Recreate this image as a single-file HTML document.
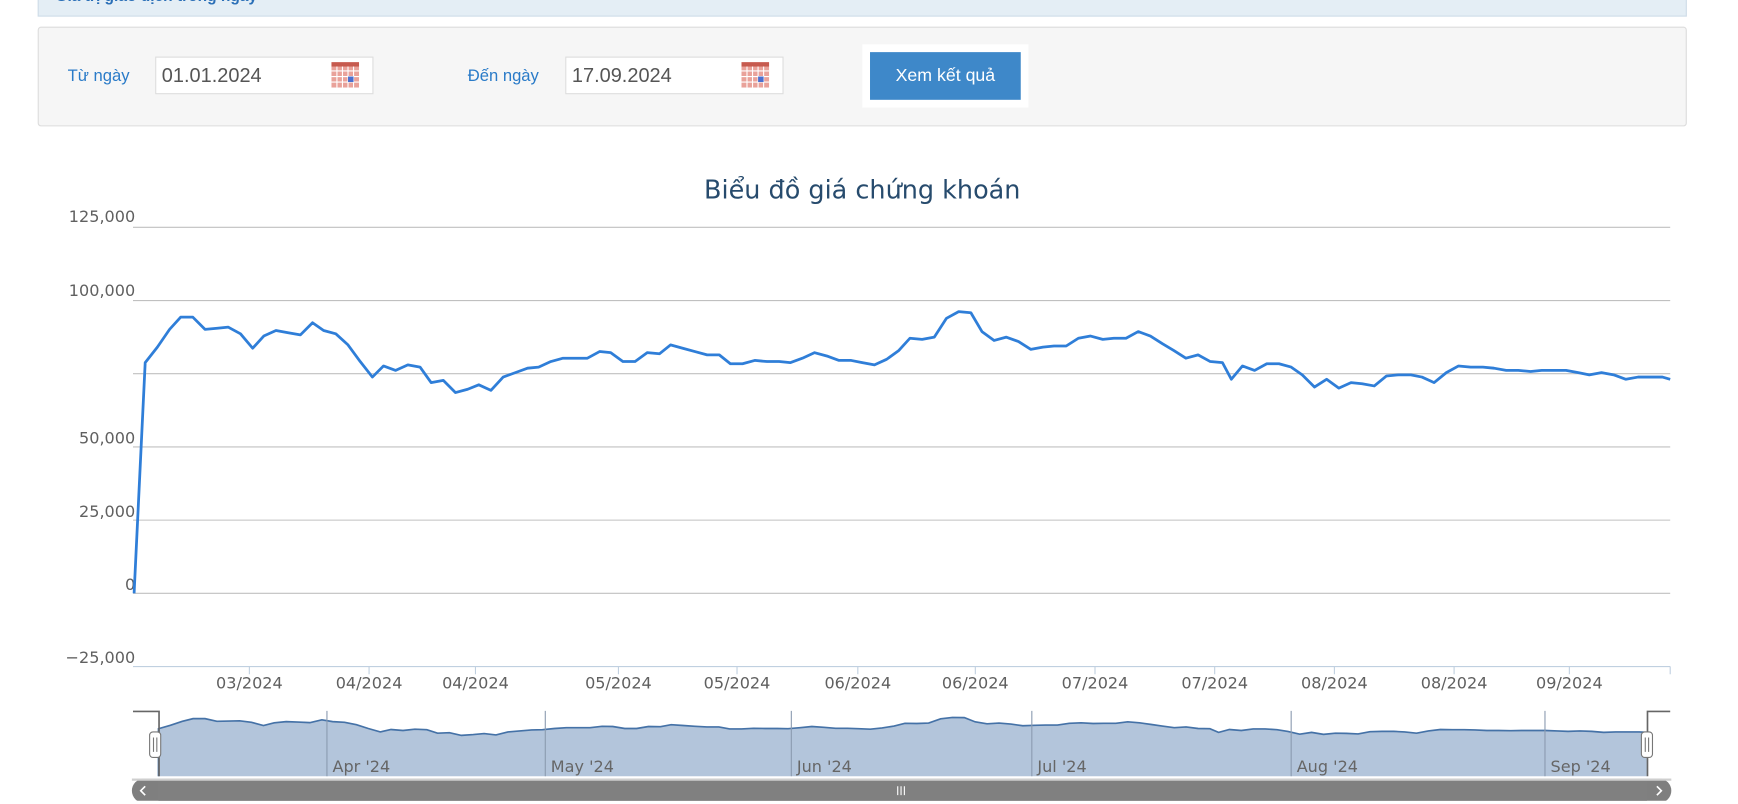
<!DOCTYPE html>
<html><head><meta charset="utf-8">
<style>
html,body{margin:0;padding:0;background:#fff;overflow:hidden;width:1738px;height:804px}
#w{position:absolute;left:0;top:0;width:1570px;height:722px;transform:scale(1.1083,1.109);transform-origin:0 0;font-family:"Liberation Sans","DejaVu Sans",sans-serif}
.a{position:absolute}
</style></head><body>
<div id="w">
 <div class="a" style="left:34px;top:-10px;width:1488px;height:25px;background:#e4eef5;border:1px solid #cfdde8;box-sizing:border-box"></div>
 <div class="a" style="left:50px;top:-12px;font-size:14px;font-weight:bold;color:#2a6fb7">Giá trị giao dịch trong ngày</div>
 <div class="a" style="left:34px;top:24px;width:1488px;height:90px;background:#f6f6f6;border:1px solid #dcdcdc;border-radius:3px;box-sizing:border-box"></div>
 <div class="a" style="left:61px;top:60px;font-size:15px;color:#2a7bc8">Từ ngày</div>
 <div class="a" style="left:140px;top:51px;width:197px;height:34px;background:#fff;border:1px solid #ddd;box-sizing:border-box"></div>
 <div class="a" style="left:146px;top:58px;font-size:18px;color:#555">01.01.2024</div>
 <div class="a" style="left:422px;top:60px;font-size:15px;color:#2a7bc8">Đến ngày</div>
 <div class="a" style="left:510px;top:51px;width:197px;height:34px;background:#fff;border:1px solid #ddd;box-sizing:border-box"></div>
 <div class="a" style="left:516px;top:58px;font-size:18px;color:#555">17.09.2024</div>
 <svg class="a" style="left:299px;top:56px" width="25" height="23"><rect x="0" y="0" width="25" height="23" fill="#e9a29a"/><rect x="0" y="0" width="25" height="4" fill="#c65a4e"/><g stroke="#fff" stroke-width="1"><path d="M0 8h25M0 13h25M0 18h25M5 4v19M10 4v19M15 4v19M20 4v19"/></g><rect x="15" y="13" width="5" height="5" fill="#4a6fd0"/></svg>
 <svg class="a" style="left:669px;top:56px" width="25" height="23"><rect x="0" y="0" width="25" height="23" fill="#e9a29a"/><rect x="0" y="0" width="25" height="4" fill="#c65a4e"/><g stroke="#fff" stroke-width="1"><path d="M0 8h25M0 13h25M0 18h25M5 4v19M10 4v19M15 4v19M20 4v19"/></g><rect x="15" y="13" width="5" height="5" fill="#4a6fd0"/></svg>
 <div class="a" style="left:778px;top:40px;width:150px;height:57px;background:#fff"></div>
 <div class="a" style="left:785px;top:47px;width:136px;height:43px;background:#3e88c9;color:#fff;font-size:16px;line-height:43px;text-align:center">Xem kết quả</div>
 <div class="a" style="left:0;width:1556px;top:159px;text-align:center;font-size:23px;color:#274b6d;font-family:'DejaVu Sans',sans-serif">Biểu đồ giá chứng khoán</div>
 <svg class="a" style="left:0;top:0" width="1560" height="722" id="s" font-family="DejaVu Sans, sans-serif"></svg>
</div>
<script>
var P=[[121,535],[131,327],[142,313],[153,297],[163,286],[174,286],[185,297],[196,296],[206,295],[217,301],[228,314],[238,303],[249,298],[260,300],[271,302],[282,291],[292,298],[303,301],[314,311],[325,326],[336,340],[346,330],[357,334],[368,329],[379,331],[389,345],[400,343],[411,354],[422,351],[432,347],[443,352],[454,340],[465,336],[476,332],[486,331],[497,326],[508,323],[519,323],[530,323],[541,317],[551,318],[562,326],[573,326],[584,318],[595,319],[605,311],[616,314],[627,317],[638,320],[649,320],[659,328],[670,328],[681,325],[692,326],[703,326],[713,327],[724,323],[735,318],[746,321],[757,325],[768,325],[778,327],[789,329],[800,324],[811,316],[821,305],[832,306],[843,304],[854,287],[865,281],[876,282],[886,299],[897,307],[908,304],[919,308],[930,315],[941,313],[951,312],[962,312],[973,305],[984,303],[995,306],[1005,305],[1016,305],[1027,299],[1038,303],[1049,310],[1059,316],[1070,323],[1081,320],[1092,326],[1103,327],[1111,342],[1121,330],[1132,334],[1143,328],[1154,328],[1165,331],[1175,338],[1186,349],[1197,342],[1208,350],[1219,345],[1229,346],[1240,348],[1251,339],[1262,338],[1273,338],[1283,340],[1294,345],[1305,336],[1316,330],[1327,331],[1338,331],[1348,332],[1359,334],[1370,334],[1381,335],[1391,334],[1402,334],[1413,334],[1424,336],[1434,338],[1445,336],[1456,338],[1467,342],[1478,340],[1489,340],[1500,340],[1507,342]];
var h='';
[205,271,337,403,469,535].forEach(function(y){h+='<line x1="120" x2="1507" y1="'+y+'" y2="'+y+'" stroke="#c0c0c0" stroke-width="1"/>'});
h+='<line x1="120" x2="1507" y1="601" y2="601" stroke="#c0d0e0"/>';
[['125,000',195],['100,000',262],['50,000',395],['25,000',461],['0',527],['\u221225,000',593]].forEach(function(l){h+='<text x="122" y="'+(l[1]+5)+'" text-anchor="end" font-size="14.5" fill="#606060">'+l[0]+'</text>'});
[[225,'03/2024'],[333,'04/2024'],[429,'04/2024'],[558,'05/2024'],[665,'05/2024'],[774,'06/2024'],[880,'06/2024'],[988,'07/2024'],[1096,'07/2024'],[1204,'08/2024'],[1312,'08/2024'],[1416,'09/2024']].forEach(function(t){h+='<line x1="'+t[0]+'" x2="'+t[0]+'" y1="601" y2="608" stroke="#c0d0e0"/><text x="'+t[0]+'" y="621" text-anchor="middle" font-size="14.5" fill="#606060">'+t[1]+'</text>'});
h+='<line x1="1507" x2="1507" y1="601" y2="608" stroke="#c0d0e0"/>';
h+='<polyline fill="none" stroke="#2f7ed8" stroke-width="2.5" stroke-linejoin="round" points="'+P.map(function(p){return p.join(',')}).join(' ')+'"/>';
var N=P.slice(1).map(function(p){return [(143+(p[0]-131)*1343/1376).toFixed(1),(648+(p[1]-286)*0.222).toFixed(1)]});
N.unshift([143,700]);
var pts=N.map(function(p){return p.join(',')}).join(' ');
h+='<polygon fill="#b3c5db" points="'+pts+' 1486,700 143,700"/>';
h+='<polyline fill="none" stroke="#4572a7" stroke-width="1.5" points="'+pts+'"/>';
[[295,"Apr '24"],[492,"May '24"],[714,"Jun '24"],[931,"Jul '24"],[1165,"Aug '24"],[1394,"Sep '24"]].forEach(function(t){h+='<line x1="'+t[0]+'" x2="'+t[0]+'" y1="641" y2="700" stroke="#8b9bb0" stroke-width="1"/><text x="'+(t[0]+5)+'" y="696" font-size="14.5" fill="#666">'+t[1]+'</text>'});
h+='<path d="M120 641.5H143.5V700M1507 641.5H1486.5V700" fill="none" stroke="#666" stroke-width="1.5"/>';
[140,1486].forEach(function(x){h+='<rect x="'+(x-5)+'" y="660" width="10" height="23" rx="3" fill="#fff" stroke="#777"/><path d="M'+(x-1.5)+' 665v13M'+(x+1.5)+' 665v13" stroke="#777"/>'});
h+='<rect x="119" y="702" width="1389" height="22" rx="11" fill="#7f7f7f"/><rect x="143" y="703" width="1343" height="20" fill="#808080"/><rect x="119" y="702" width="1389" height="2" fill="#cfcfcf"/>';
h+='<path d="M131 709l-4 4 4 4M1495 709l4 4-4 4" fill="none" stroke="#fff" stroke-width="1.5"/>';
h+='<path d="M810 709v8M813 709v8M816 709v8" stroke="#fff"/>';
document.getElementById('s').innerHTML=h;
</script>
</body></html>
